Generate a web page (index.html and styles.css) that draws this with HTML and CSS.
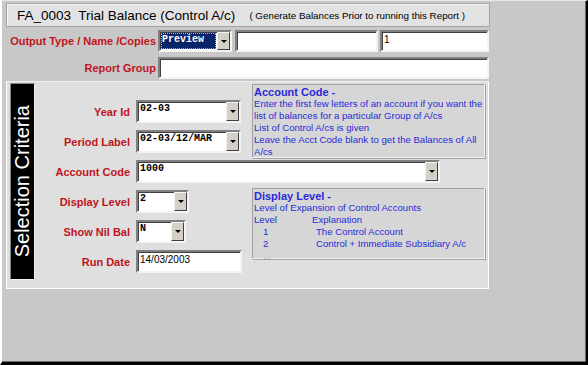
FILE: index.html
```html
<!DOCTYPE html>
<html lang="en">
<head>
  <meta charset="UTF-8">
  <title>Trial Balance (Control A/c)</title>
  <link rel="stylesheet" href="styles.css">
</head>
<body>
  <div class="window">
    <div class="title-bar">
      <span class="title">FA_0003&nbsp; Trial Balance (Control A/c)</span>
      <span class="subtitle">( Generate Balances Prior to running this Report )</span>
    </div>

    <div class="form-row first-row">
      <div class="top-label">Output Type / Name /Copies</div>
      <div class="select preview-select">
        <span class="select-value">Preview</span>
        <span class="select-btn"><span class="arrow"></span></span>
      </div>
      <div class="text-box name-box"></div>
      <div class="text-box copies-box">1</div>
    </div>

    <div class="form-row second-row">
      <div class="top-label">Report Group</div>
      <div class="text-box group-box"></div>
    </div>

    <div class="panel">
      <div class="side-bar"><span>Selection Criteria</span></div>
      <div class="criteria">
        <div class="help help-account">
          <div class="help-head">Account Code -</div>
          <div>Enter the first few letters of an account if you want the list of balances for a particular Group of A/cs</div>
          <div>List of Control A/cs is given</div>
          <div>Leave the Acct Code blank to get the Balances of All A/cs</div>
        </div>

        <div class="field-label row-year">Year Id</div>
        <div class="select select-year row-year">
          <span class="select-value">02-03</span>
          <span class="select-btn"><span class="arrow"></span></span>
        </div>

        <div class="field-label row-period">Period Label</div>
        <div class="select select-year row-period">
          <span class="select-value">02-03/12/MAR</span>
          <span class="select-btn"><span class="arrow"></span></span>
        </div>

        <div class="field-label row-account">Account Code</div>
        <div class="select select-account row-account">
          <span class="select-value">1000</span>
          <span class="select-btn"><span class="arrow"></span></span>
        </div>

        <div class="field-label row-level">Display Level</div>
        <div class="select select-level row-level">
          <span class="select-value">2</span>
          <span class="select-btn"><span class="arrow"></span></span>
        </div>

        <div class="field-label row-nil">Show Nil Bal</div>
        <div class="select select-nil row-nil">
          <span class="select-value">N</span>
          <span class="select-btn"><span class="arrow"></span></span>
        </div>

        <div class="field-label row-date">Run Date</div>
        <div class="text-box date-box row-date">14/03/2003</div>

        <div class="help help-level">
          <div class="help-head">Display Level -</div>
          <div>Level of Expansion of Control Accounts</div>
          <div class="level-line"><span class="lvl-left">Level</span><span class="lvl-right">Explanation</span></div>
          <div class="level-line"><span class="lvl-num">1</span><span class="lvl-text">The Control Account</span></div>
          <div class="level-line"><span class="lvl-num">2</span><span class="lvl-text">Control + Immediate Subsidiary A/c</span></div>
          <div class="level-line faint"><span class="lvl-num">...</span></div>
        </div>
      </div>
    </div>
  </div>
</body>
</html>
```

FILE: styles.css
```css
body {
  margin: 0;
  background-color: #c8c8c8;
  font-family: "Liberation Sans", Arial, sans-serif;
}

.window {
  box-sizing: border-box;
  width: 588px;
  height: 365px;
  padding: 2px 0 0 4px;
  background-color: #c8c8c8;
  border-left: 2px solid #ffffff;
  border-top: 1px solid #e8e8e8;
  border-right: 2px solid #000;
  border-bottom: 3px solid #000;
  box-shadow: inset -1px -1px 0 #6a6a6a;
}

.title-bar {
  box-sizing: border-box;
  width: 484px;
  height: 24px;
  display: flex;
  align-items: center;
  padding-left: 10px;
  background-color: #e2e2e2;
  border: 1px solid #a4a4a4;
  box-shadow: inset 1px 1px 0 #f4f4f4;
  white-space: nowrap;
}

.title {
  font-size: 13.5px;
  color: #000;
}

.subtitle {
  margin-left: 14px;
  font-size: 9.8px;
  color: #000;
}

.form-row {
  display: flex;
  align-items: center;
}

.first-row {
  margin-top: 3px;
  height: 22px;
}

.second-row {
  margin-top: 5px;
  height: 22px;
}

.top-label {
  box-sizing: border-box;
  width: 152px;
  padding-right: 2px;
  text-align: right;
  font-size: 11px;
  font-weight: bold;
  color: #c0141c;
  white-space: nowrap;
}

/* sunken controls */
.select,
.text-box {
  box-sizing: border-box;
  height: 23px;
  background-color: #fff;
  border: 2px solid;
  border-color: #808080 #f4f4f4 #f4f4f4 #808080;
  box-shadow: inset 1px 1px 0 #404040;
}

.select {
  display: flex;
}

.select-value {
  flex: 1;
  padding: 1px 0 0 2px;
  font-family: "Liberation Mono", "Courier New", monospace;
  font-size: 10px;
  font-weight: bold;
  color: #000;
  white-space: nowrap;
}

.select-btn {
  box-sizing: border-box;
  width: 13px;
  display: flex;
  align-items: center;
  justify-content: center;
  background-color: #d4d0c8;
  border: 1px solid;
  border-color: #f4f4f4 #404040 #404040 #f4f4f4;
}

.arrow {
  width: 0;
  height: 0;
  border-left: 3px solid transparent;
  border-right: 3px solid transparent;
  border-top: 3px solid #000;
}

.text-box {
  padding: 2px 0 0 2px;
  font-size: 10px;
  color: #000;
}

.preview-select {
  width: 74px;
  height: 22px;
}

.preview-select .select-value {
  background-color: #0a246a;
  color: #fff;
  outline: 1px dotted #c8b060;
  outline-offset: -1px;
  margin: 1px;
  padding: 1px 0 0 1px;
}

.name-box {
  width: 143px;
  height: 22px;
  margin-left: 3px;
}

.copies-box {
  width: 109px;
  height: 22px;
  margin-left: 2px;
}

.group-box {
  width: 331px;
  height: 22px;
}

/* selection criteria panel */
.panel {
  box-sizing: border-box;
  width: 483px;
  height: 208px;
  margin-top: 2px;
  display: flex;
  align-items: flex-start;
  padding: 1px 0 0 3px;
  background-color: #dfdfdf;
  border: 1px solid #ffffff;
  border-top-color: #eeeeee;
}

.side-bar {
  box-sizing: border-box;
  width: 25px;
  height: 197px;
  display: flex;
  align-items: center;
  justify-content: center;
  background-color: #000;
  border: 1px solid #f0f0f0;
  border-left-color: #888;
  border-top-color: #888;
}

.side-bar span {
  writing-mode: vertical-rl;
  transform: rotate(180deg);
  color: #fff;
  font-size: 20px;
  white-space: nowrap;
}

.criteria {
  display: grid;
  grid-template-columns: 101px 116px 233px;
  grid-template-rows: 9px repeat(6, 23px);
  row-gap: 7px;
  margin-top: 1px;
}

.field-label {
  grid-column: 1;
  align-self: center;
  padding-right: 6px;
  text-align: right;
  font-size: 11px;
  font-weight: bold;
  color: #c0141c;
  white-space: nowrap;
}

.row-year { grid-row: 2; }
.row-period { grid-row: 3; }
.row-account { grid-row: 4; }
.row-level { grid-row: 5; }
.row-nil { grid-row: 6; }
.row-date { grid-row: 7; }

.criteria .select,
.criteria .text-box {
  grid-column: 2;
}

.select-year { width: 105px; }
.criteria .select-account { grid-column: 2 / 4; width: 304px; }
.select-level { width: 53px; }
.select-nil { width: 50px; }
.date-box { width: 106px; }

.help {
  box-sizing: border-box;
  grid-column: 3;
  align-self: start;
  width: 233px;
  padding: 1px 0 0 1px;
  background-color: #d6d6d6;
  border: 1px solid #a0a0a0;
  border-right-color: #f4f4f4;
  border-bottom-color: #f4f4f4;
  box-shadow: 1px 1px 0 #a0a0a0;
  color: #2a2ad8;
  font-size: 9.6px;
  line-height: 12px;
}

.help-head {
  font-size: 11px;
  font-weight: bold;
}

.help-account {
  grid-row: 1 / 4;
  height: 74px;
}

.help-level {
  grid-row: 5 / 8;
  height: 71px;
  margin-top: -2px;
}

.level-line {
  display: flex;
  white-space: nowrap;
}

.lvl-left { width: 58px; }
.lvl-num { width: 62px; padding-left: 9px; box-sizing: border-box; }
.faint { color: #a0a0e8; }
```
